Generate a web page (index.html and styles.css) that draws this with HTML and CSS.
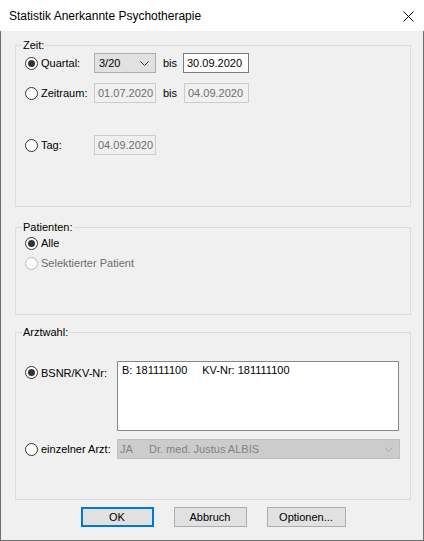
FILE: index.html
```html
<!DOCTYPE html>
<html lang="de">
<head>
<meta charset="utf-8">
<title>Statistik Anerkannte Psychotherapie</title>
<link rel="stylesheet" href="styles.css">
</head>
<body>
<div class="window">
  <div class="titlebar">
    <span class="title">Statistik Anerkannte Psychotherapie</span>
    <svg class="close" width="11" height="11" viewBox="0 0 11 11"><path d="M0.5 0.5 L10.5 10.5 M10.5 0.5 L0.5 10.5" stroke="#000" stroke-width="1" fill="none"/></svg>
  </div>
  <div class="client">
    <fieldset class="group g-zeit">
      <legend>Zeit:</legend>
      <div class="row r-quartal">
        <span class="opt w-zeit"><span class="radio on"></span>Quartal:</span>
        <div class="combo c-quartal"><span>3/20</span><svg class="chev" width="9" height="5" viewBox="0 0 9 5"><path d="M0.5 0.5 L4.5 4.5 L8.5 0.5" stroke="#333" fill="none"/></svg></div>
        <span class="bis">bis</span>
        <div class="edit e-bis1">30.09.2020</div>
      </div>
      <div class="row r-zeitraum">
        <span class="opt w-zeit"><span class="radio"></span>Zeitraum:</span>
        <div class="edit disabled e-from">01.07.2020</div>
        <span class="bis bis2">bis</span>
        <div class="edit disabled e-bis2">04.09.2020</div>
      </div>
      <div class="row r-tag">
        <span class="opt w-zeit"><span class="radio"></span>Tag:</span>
        <div class="edit disabled e-from">04.09.2020</div>
      </div>
    </fieldset>

    <fieldset class="group g-pat">
      <legend>Patienten:</legend>
      <div class="row small r-alle">
        <span class="opt"><span class="radio on"></span>Alle</span>
      </div>
      <div class="row small r-sel">
        <span class="opt dis"><span class="radio off"></span>Selektierter Patient</span>
      </div>
    </fieldset>

    <fieldset class="group g-arzt">
      <legend>Arztwahl:</legend>
      <div class="row top r-bsnr">
        <span class="opt w-arzt top-opt"><span class="radio on"></span>BSNR/KV-Nr:</span>
        <div class="textbox"><span>B: 181111100</span><span class="kv">KV-Nr: 181111100</span></div>
      </div>
      <div class="row r-einzel">
        <span class="opt w-arzt"><span class="radio"></span>einzelner Arzt:</span>
        <div class="combo disabled c-arzt"><span class="ja">JA</span><span>Dr. med. Justus ALBIS</span><svg class="chev" width="9" height="5" viewBox="0 0 9 5"><path d="M0.5 0.5 L4.5 4.5 L8.5 0.5" stroke="#a8a8a8" fill="none"/></svg></div>
      </div>
    </fieldset>

    <div class="buttons">
      <button class="btn default b-ok">OK</button>
      <button class="btn b-abbruch">Abbruch</button>
      <button class="btn b-opt">Optionen...</button>
    </div>
  </div>
</div>
</body>
</html>
```

FILE: styles.css
```css
html, body {
  margin: 0;
  padding: 0;
  background: #f0f0f0;
}
.window {
  width: 424px;
  height: 541px;
  display: flex;
  flex-direction: column;
  font-family: "Liberation Sans", Arial, sans-serif;
  font-size: 11px;
  color: #000;
}
.titlebar {
  height: 31px;
  flex: none;
  background: #fff;
  display: flex;
  align-items: center;
  justify-content: space-between;
  padding: 0 10px 0 9px;
  box-sizing: border-box;
}
.title {
  font-size: 12px;
  color: #000;
}
.close {
  display: block;
  margin-top: 1px;
}
.client {
  flex: 1;
  background: #f0f0f0;
  border: 1px solid #6e6e6e;
  border-top: none;
  padding: 7px 12px 0 14px;
}
.group {
  margin: 0;
  padding: 0 0 0 9px;
  border: 1px solid #dcdcdc;
  min-inline-size: 0;
}
.group legend {
  margin-left: -3px;
  padding: 0 1px;
  line-height: 15px;
  font-size: 11px;
}
.g-zeit { padding-bottom: 51px; }
.g-pat { margin-top: 13px; padding-bottom: 43px; }
.g-arzt { margin-top: 10px; padding-bottom: 40px; }

.row {
  display: flex;
  align-items: center;
  height: 20px;
}
.row.small { height: 16px; }
.r-quartal { margin-top: 0; }
.r-zeitraum { margin-top: 10px; }
.r-tag { margin-top: 32px; }
.r-alle { margin-top: 0; }
.r-sel { margin-top: 4px; }
.r-bsnr { margin-top: 21px; height: 70px; align-items: flex-start; }
.r-einzel { margin-top: 8px; }

.opt {
  display: flex;
  align-items: center;
  white-space: nowrap;
}
.opt.dis { color: #6d6d6d; }
.top-opt { margin-top: 5px; }
.w-zeit { width: 69px; flex: none; }
.w-arzt { width: 92px; flex: none; }

.radio {
  width: 13px;
  height: 13px;
  box-sizing: border-box;
  border: 1px solid #333;
  border-radius: 50%;
  background: #fff;
  margin-right: 3px;
  display: flex;
  align-items: center;
  justify-content: center;
  flex: none;
}
.radio.on::after {
  content: "";
  width: 7px;
  height: 7px;
  border-radius: 50%;
  background: #333;
}
.radio.off {
  border-color: #bcbcbc;
  background: #fcfcfc;
}

.combo {
  height: 20px;
  box-sizing: border-box;
  border: 1px solid #adadad;
  background: #e1e1e1;
  display: flex;
  align-items: center;
  padding-left: 4px;
  padding-right: 6px;
  flex: none;
}
.combo .chev { margin-left: auto; display: block; }
.c-quartal { width: 62px; }
.combo.disabled {
  background: #cccccc;
  border-color: #bfbfbf;
  color: #838383;
}
.c-arzt { width: 283px; padding-left: 2px; }
.c-arzt .ja { width: 29px; }

.bis {
  width: 20px;
  padding-left: 7px;
  flex: none;
}
.bis2 { width: 21px; }

.edit {
  height: 20px;
  box-sizing: border-box;
  border: 1px solid #7a7a7a;
  background: #fff;
  padding-left: 3px;
  display: flex;
  align-items: center;
  flex: none;
}
.edit.disabled {
  border-color: #cccccc;
  background: #f0f0f0;
  color: #6d6d6d;
}
.e-bis1 { width: 66px; }
.e-from { width: 62px; }
.e-bis2 { width: 65px; }

.textbox {
  width: 282px;
  height: 70px;
  box-sizing: border-box;
  border: 1px solid #828790;
  background: #fff;
  padding: 2px 4px;
  display: flex;
  align-items: flex-start;
  flex: none;
}
.textbox .kv { margin-left: 15px; }

.buttons {
  display: flex;
  justify-content: center;
  gap: 20px;
  margin-top: 7px;
}
.btn {
  height: 20px;
  box-sizing: border-box;
  border: 1px solid #adadad;
  background: #e1e1e1;
  font-family: "Liberation Sans", Arial, sans-serif;
  font-size: 11px;
  color: #000;
  padding: 0;
  margin: 0;
}
.btn.default {
  border: 2px solid #0078d7;
}
.b-ok { width: 73px; }
.b-abbruch { width: 73px; }
.b-opt { width: 79px; }
```
